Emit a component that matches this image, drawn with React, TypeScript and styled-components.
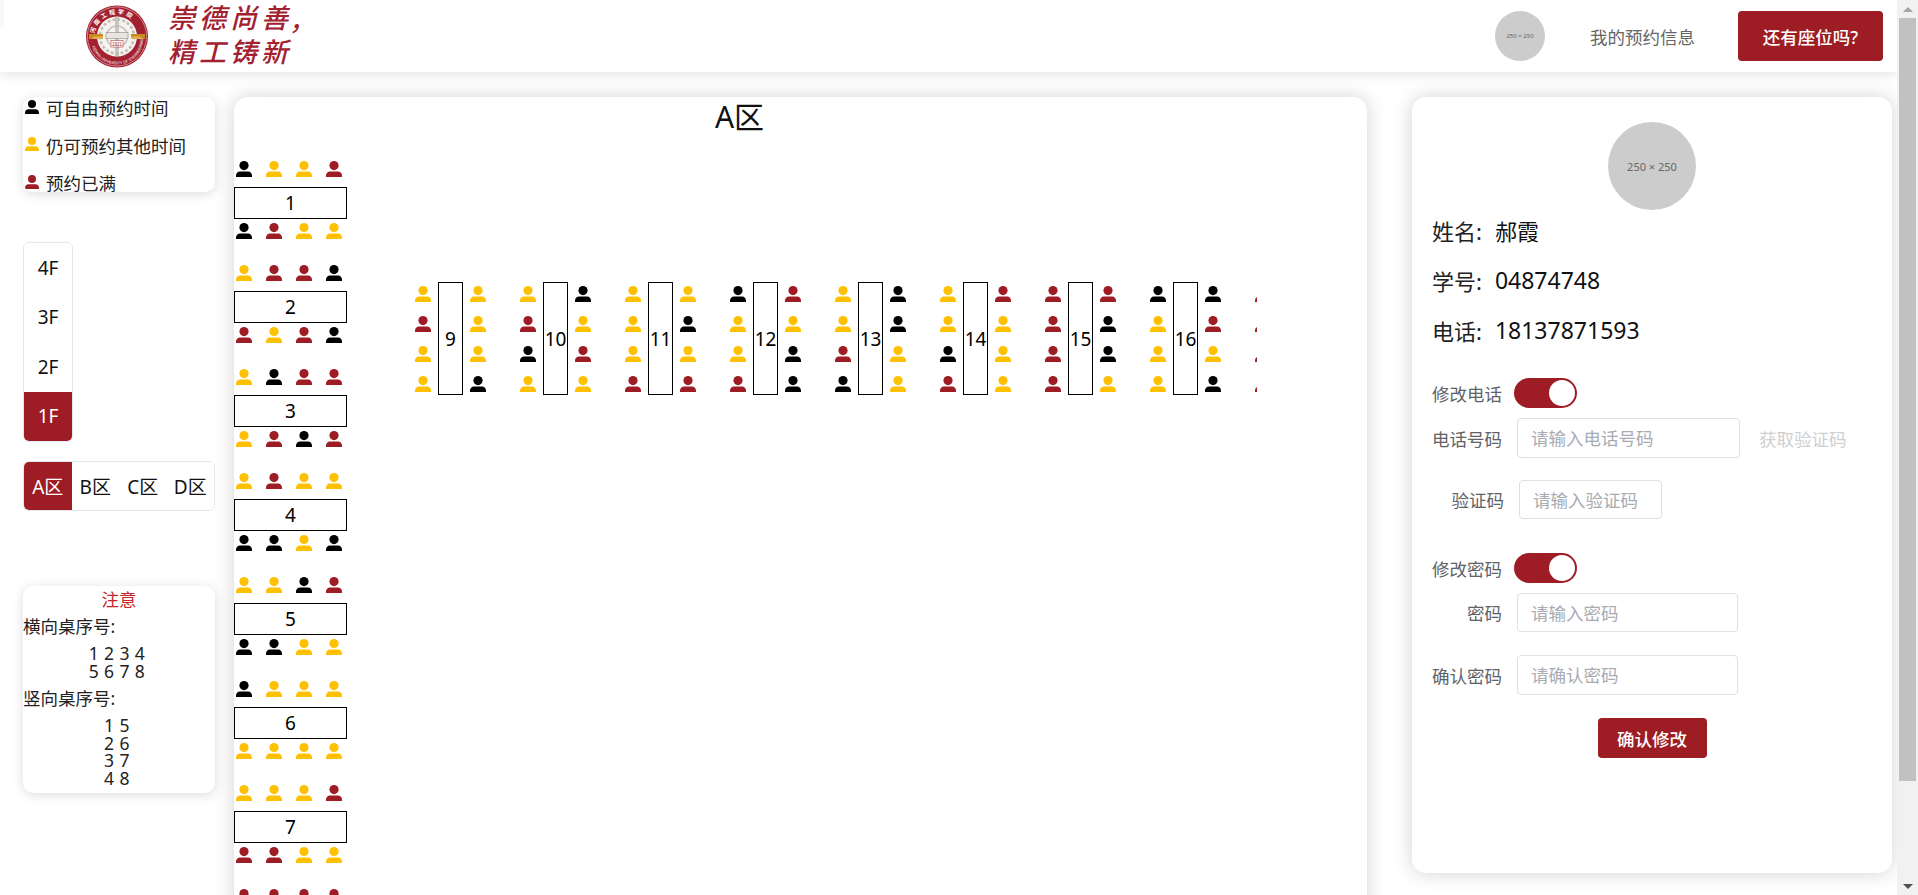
import React from 'react'
import styled, { createGlobalStyle } from 'styled-components'

const RED = '#9e1c23'
const FONT = `"Noto Sans", "Noto Sans CJK SC", sans-serif`

const GlobalStyle = createGlobalStyle`
  html, body {
    margin: 0;
    padding: 0;
    height: 895px;
    overflow: hidden;
    background: #fff;
    font-family: ${FONT};
    color: #111;
  }
  * {
    box-sizing: border-box;
  }
`

const Screen = styled.div`
  display: flex;
  width: 1918px;
  height: 895px;
  overflow: hidden;
`

const Page = styled.div`
  position: relative;
  width: 1897px;
  height: 895px;
  overflow: hidden;
`

const Scrollbar = styled.div`
  display: flex;
  flex-direction: column;
  align-items: center;
  width: 21px;
  height: 895px;
  background: #f1f1f1;
`

const ScrollArrow = styled.div<{ $down?: boolean }>`
  display: flex;
  align-items: center;
  justify-content: center;
  height: 18px;
  flex-shrink: 0;
  &::before {
    content: '';
    border-left: 5px solid transparent;
    border-right: 5px solid transparent;
    ${({ $down }) => ($down ? 'border-top: 5px solid #505050;' : 'border-bottom: 5px solid #a3a3a3;')}
  }
`

const ScrollThumb = styled.div`
  width: 17px;
  height: 763px;
  background: #c1c1c1;
`

const ScrollRest = styled.div`
  flex: 1;
`

const CornerTab = styled.div`
  position: absolute;
  left: 0;
  top: 0;
  width: 4px;
  height: 28px;
  background: #f7f7f7;
  border-bottom-right-radius: 4px;
  z-index: 3;
`

const Nav = styled.header`
  position: relative;
  z-index: 2;
  display: flex;
  align-items: center;
  height: 72px;
  padding-left: 86px;
  background: #fff;
  box-shadow: 0 2px 12px rgba(0, 0, 0, 0.12);
`

const Motto = styled.div`
  margin: 0 0 4px 20px;
  color: #a3202f;
  font-family: "Noto Sans CJK SC", sans-serif;
  font-size: 27px;
  font-weight: 500;
  font-style: italic;
  line-height: 34px;
  letter-spacing: 4px;
  white-space: nowrap;
`

const NavRight = styled.div`
  display: flex;
  align-items: center;
  margin-left: auto;
  padding-right: 14px;
`

const Avatar = styled.div<{ $size: number; $font: number }>`
  display: flex;
  align-items: center;
  justify-content: center;
  width: ${({ $size }) => $size}px;
  height: ${({ $size }) => $size}px;
  border-radius: 50%;
  background: #cccccc;
  color: #666;
  font-size: ${({ $font }) => $font}px;
  white-space: nowrap;
  flex-shrink: 0;
`

const NavLink = styled.span`
  margin-left: 45px;
  margin-right: 43px;
  color: #666;
  font-size: 17.5px;
`

const RedButton = styled.button<{ $width: number; $height: number }>`
  width: ${({ $width }) => $width}px;
  height: ${({ $height }) => $height}px;
  padding: 0;
  border: 0;
  border-radius: 4px;
  background: ${RED};
  color: #fff;
  font-family: ${FONT};
  font-size: 17.5px;
  font-weight: 500;
`

const Content = styled.main`
  display: flex;
  align-items: flex-start;
  padding: 25px 0 0 23px;
`

const LeftColumn = styled.aside`
  display: flex;
  flex-direction: column;
  width: 192px;
  flex-shrink: 0;
`

const Card = styled.section`
  background: #fff;
  border-radius: 10px;
  box-shadow: 0 2px 12px rgba(0, 0, 0, 0.14);
`

const LargeCard = styled(Card)`
  border-radius: 14px;
  box-shadow: 0 0 20px rgba(0, 0, 0, 0.18);
`

const Legend = styled(Card)`
  height: 95px;
  overflow: hidden;
`

const LegendRow = styled.div`
  display: flex;
  align-items: center;
  height: 37.5px;
  margin-top: -8px;
  margin-bottom: 8px;
  padding-left: 2px;
  font-size: 17.5px;
  color: #222;
  & > svg {
    margin: -2px 7px 0 0;
  }
`

const FloorList = styled.div`
  display: flex;
  flex-direction: column;
  width: 50px;
  height: 200px;
  margin-top: 50px;
  overflow: hidden;
  border: 1px solid #e4e7ed;
  border-radius: 6px;
`

const FloorItem = styled.div<{ $active?: boolean }>`
  display: flex;
  flex: 1;
  align-items: center;
  justify-content: center;
  font-size: 19px;
  background: ${({ $active }) => ($active ? RED : '#fff')};
  color: ${({ $active }) => ($active ? '#fff' : '#111')};
`

const AreaTabs = styled.div`
  display: flex;
  height: 50px;
  margin-top: 19px;
  overflow: hidden;
  border: 1px solid #e4e7ed;
  border-radius: 6px;
`

const AreaTab = styled.div<{ $active?: boolean }>`
  display: flex;
  flex: 1;
  align-items: center;
  justify-content: center;
  font-size: 19px;
  white-space: nowrap;
  background: ${({ $active }) => ($active ? RED : '#fff')};
  color: ${({ $active }) => ($active ? '#fff' : '#111')};
`

const Notice = styled(Card)`
  height: 207px;
  margin-top: 75px;
  font-size: 17.5px;
  color: #222;
`

const NoticeTitle = styled.div`
  height: 28px;
  line-height: 26px;
  text-align: center;
  color: #c9252d;
`

const NoticeLabel = styled.div`
  height: 28px;
  line-height: 24px;
`

const NoticeDigits = styled.div`
  padding: 3px 4px 6px 0;
  line-height: 17.6px;
  letter-spacing: 0.4px;
  text-align: center;
  white-space: pre;
`

const Hall = styled(LargeCard)`
  width: 1133px;
  height: 900px;
  margin-left: 19px;
  flex-shrink: 0;
  overflow: hidden;
`

const HallTitle = styled.div`
  height: 40px;
  padding-right: 122px;
  line-height: 40px;
  text-align: center;
  font-size: 30px;
  color: #111;
`

const HallBody = styled.div`
  display: flex;
  align-items: flex-start;
`

const RowTables = styled.div`
  width: 113px;
  padding-top: 24px;
  flex-shrink: 0;
`

const RowTable = styled.div`
  height: 104px;
`

const SeatRow = styled.div<{ $below?: boolean }>`
  display: flex;
  gap: 14px;
  height: ${({ $below }) => ($below ? 46 : 26)}px;
  padding: ${({ $below }) => ($below ? '4px 0 0 2px' : '0 0 0 2px')};
`

const TableBox = styled.div`
  display: flex;
  align-items: center;
  justify-content: center;
  border: 1px solid #000;
  background: #fff;
  font-size: 19px;
  color: #000;
`

const WideTable = styled(TableBox)`
  width: 113px;
  height: 32px;
`

const ColumnTables = styled.div`
  display: flex;
  width: 842px;
  margin-left: 68px;
  padding-top: 145px;
  overflow: hidden;
  flex-shrink: 0;
`

const ColumnTable = styled.div`
  display: flex;
  gap: 7px;
  width: 105px;
  flex-shrink: 0;
`

const SeatColumn = styled.div`
  display: flex;
  flex-direction: column;
  gap: 14px;
  padding-top: 4px;
`

const TallTable = styled(TableBox)`
  width: 25px;
  height: 113px;
`

const Profile = styled(LargeCard)`
  display: flex;
  flex-direction: column;
  width: 480px;
  height: 776px;
  margin-left: 45px;
  padding: 25px 20px 0;
  flex-shrink: 0;
`

const ProfileAvatar = styled.div`
  display: flex;
  justify-content: center;
  margin-bottom: -5px;
`

const InfoRow = styled.div`
  display: flex;
  align-items: center;
  height: 50px;
  font-size: 22px;
  color: #222;
`

const InfoValue = styled.span<{ $digits?: boolean }>`
  margin-left: 13px;
  color: #111;
  font-size: ${({ $digits }) => ($digits ? 23 : 22)}px;
`

const FormRow = styled.div<{ $top: number }>`
  display: flex;
  align-items: center;
  margin-top: ${({ $top }) => $top}px;
  font-size: 17.5px;
  color: #606266;
`

const FieldLabel = styled.label<{ $indent?: number }>`
  width: 70px;
  margin-left: ${({ $indent }) => $indent ?? 0}px;
  text-align: right;
  white-space: nowrap;
  flex-shrink: 0;
`

const ToggleTrack = styled.div`
  display: flex;
  justify-content: flex-end;
  align-items: center;
  width: 63px;
  height: 30px;
  margin-left: 12px;
  padding-right: 2px;
  border-radius: 15px;
  background: ${RED};
`

const ToggleKnob = styled.div`
  width: 26px;
  height: 26px;
  border-radius: 50%;
  background: #fff;
`

const TextInput = styled.input<{ $width: number; $height?: number }>`
  width: ${({ $width }) => $width}px;
  height: ${({ $height }) => $height ?? 40}px;
  margin-left: 15px;
  padding: 0 13px;
  border: 1px solid #dcdfe6;
  border-radius: 4px;
  background: #fff;
  font-family: ${FONT};
  font-size: 17.5px;
  outline: none;
  &::placeholder {
    color: #a8abb2;
    opacity: 1;
  }
`

const CodeLink = styled.span`
  margin-left: 19px;
  color: #cfcfcf;
  white-space: nowrap;
`

const FormAction = styled.div`
  display: flex;
  justify-content: center;
  margin-top: 23px;
`

type SeatState = 'K' | 'Y' | 'R'

const SEAT_COLORS: Record<SeatState, string> = {
  K: '#000000',
  Y: '#ffc000',
  R: RED
}

function Seat({ state, size = 16 }: { state: SeatState; size?: number }) {
  return (
    <svg width={size} height={size} viewBox="0 0 16 16" fill={SEAT_COLORS[state]} style={{ flexShrink: 0 }}>
      <circle cx="8" cy="4.6" r="4.6" />
      <path d="M0 16v-1.4C0 12.4 1.6 10.6 4 10.6h8c2.4 0 4 1.8 4 4V16z" />
    </svg>
  )
}

function Seats({ states }: { states: string }) {
  return (
    <>
      {states.split('').map((s, i) => (
        <Seat key={i} state={s as SeatState} />
      ))}
    </>
  )
}

function Seal() {
  return (
    <svg width="62" height="63" viewBox="0 0 62 62" style={{ flexShrink: 0 }}>
      <defs>
        <path id="sealTop" d="M8.5 31a22.5 22.5 0 0 1 45 0" />
        <path id="sealBottom" d="M5 33a26 26 0 0 0 52 0" />
      </defs>
      <circle cx="31" cy="31" r="31" fill="#a3202f" />
      <circle cx="31" cy="31" r="29.6" fill="none" stroke="#e9c9c9" strokeWidth="0.6" />
      <circle cx="31" cy="31" r="20" fill="#f6f3f0" />
      <circle cx="31" cy="31" r="17" fill="none" stroke="#c4bfba" strokeWidth="2.5" strokeDasharray="3 2" />
      <circle cx="31" cy="31" r="10.5" fill="none" stroke="#cbc6c1" strokeWidth="1.6" />
      <rect x="29" y="11" width="4" height="40" fill="#b8b3ae" opacity="0.7" />
      <path d="M3 28.5h14v5H3zM45 28.5h14v5H45z" fill="#c98a1e" />
      <path d="M8 31h9v2.5H6zM45 31h9l2 2.5H45z" fill="#e2b24f" />
      <rect x="20" y="27" width="22" height="6" fill="#e8e4df" stroke="#8f8a85" strokeWidth="0.6" />
      <rect x="25" y="35" width="12" height="6.5" fill="#fff" stroke="#a3202f" strokeWidth="0.5" />
      <text x="31" y="40.2" textAnchor="middle" fontSize="4.6" fill="#a3202f" fontFamily="Liberation Sans, sans-serif">1921</text>
      <text fontSize="6" fill="#fff" fontFamily="Noto Sans CJK SC, sans-serif" fontWeight="700" letterSpacing="2.2">
        <textPath href="#sealTop" startOffset="4%">河南工程学院</textPath>
      </text>
      <text fontSize="3.9" fill="#fff" fontFamily="Liberation Sans, sans-serif">
        <textPath href="#sealBottom" startOffset="10%">HENAN UNIVERSITY OF ENGINEERING</textPath>
      </text>
    </svg>
  )
}

const ROW_TABLES = [
  ['KYYR', 'KRYY'],
  ['YRRK', 'RYRK'],
  ['YKRR', 'YRKR'],
  ['YRYY', 'KKYK'],
  ['YYKR', 'KKYY'],
  ['KYYY', 'YYYY'],
  ['YYYR', 'RRYY'],
  ['RRRR', 'YYYY']
]

const COLUMN_TABLES = [
  ['YRYY', 'YYYK'],
  ['YRKY', 'KYRY'],
  ['YYYR', 'YKYR'],
  ['KYYR', 'RYKK'],
  ['YYRK', 'KKYY'],
  ['YYKR', 'RYYY'],
  ['RRRR', 'RKKY'],
  ['KYYY', 'KRYK'],
  ['RRRR', 'YYYY']
]

export default function App() {
  return (
    <Screen>
      <GlobalStyle />
      <Page>
        <CornerTab />
        <Nav>
          <Seal />
          <Motto>
            崇德尚善,
            <br />
            精工铸新
          </Motto>
          <NavRight>
            <Avatar $size={50} $font={6}>250 × 250</Avatar>
            <NavLink>我的预约信息</NavLink>
            <RedButton $width={145} $height={50}>还有座位吗?</RedButton>
          </NavRight>
        </Nav>
        <Content>
          <LeftColumn>
            <Legend>
              <LegendRow><Seat state="K" size={14} />可自由预约时间</LegendRow>
              <LegendRow><Seat state="Y" size={14} />仍可预约其他时间</LegendRow>
              <LegendRow><Seat state="R" size={14} />预约已满</LegendRow>
            </Legend>
            <FloorList>
              <FloorItem>4F</FloorItem>
              <FloorItem>3F</FloorItem>
              <FloorItem>2F</FloorItem>
              <FloorItem $active>1F</FloorItem>
            </FloorList>
            <AreaTabs>
              <AreaTab $active>A区</AreaTab>
              <AreaTab>B区</AreaTab>
              <AreaTab>C区</AreaTab>
              <AreaTab>D区</AreaTab>
            </AreaTabs>
            <Notice>
              <NoticeTitle>注意</NoticeTitle>
              <NoticeLabel>横向桌序号:</NoticeLabel>
              <NoticeDigits>{'1 2 3 4\n5 6 7 8'}</NoticeDigits>
              <NoticeLabel>竖向桌序号:</NoticeLabel>
              <NoticeDigits>{'1 5\n2 6\n3 7\n4 8'}</NoticeDigits>
            </Notice>
          </LeftColumn>
          <Hall>
            <HallTitle>A区</HallTitle>
            <HallBody>
              <RowTables>
                {ROW_TABLES.map(([above, below], i) => (
                  <RowTable key={i}>
                    <SeatRow><Seats states={above} /></SeatRow>
                    <WideTable>{i + 1}</WideTable>
                    <SeatRow $below><Seats states={below} /></SeatRow>
                  </RowTable>
                ))}
              </RowTables>
              <ColumnTables>
                {COLUMN_TABLES.map(([left, right], i) => (
                  <ColumnTable key={i}>
                    <SeatColumn><Seats states={left} /></SeatColumn>
                    <TallTable>{i + 9}</TallTable>
                    <SeatColumn><Seats states={right} /></SeatColumn>
                  </ColumnTable>
                ))}
              </ColumnTables>
            </HallBody>
          </Hall>
          <Profile>
            <ProfileAvatar>
              <Avatar $size={88} $font={11}>250 × 250</Avatar>
            </ProfileAvatar>
            <InfoRow>姓名:<InfoValue>郝霞</InfoValue></InfoRow>
            <InfoRow>学号:<InfoValue $digits>04874748</InfoValue></InfoRow>
            <InfoRow>电话:<InfoValue $digits>18137871593</InfoValue></InfoRow>
            <FormRow $top={23}>
              <FieldLabel>修改电话</FieldLabel>
              <ToggleTrack><ToggleKnob /></ToggleTrack>
            </FormRow>
            <FormRow $top={10}>
              <FieldLabel>电话号码</FieldLabel>
              <TextInput $width={223} placeholder="请输入电话号码" />
              <CodeLink>获取验证码</CodeLink>
            </FormRow>
            <FormRow $top={22}>
              <FieldLabel $indent={2}>验证码</FieldLabel>
              <TextInput $width={143} $height={39} placeholder="请输入验证码" />
            </FormRow>
            <FormRow $top={34}>
              <FieldLabel>修改密码</FieldLabel>
              <ToggleTrack><ToggleKnob /></ToggleTrack>
            </FormRow>
            <FormRow $top={10}>
              <FieldLabel>密码</FieldLabel>
              <TextInput $width={221} $height={39} placeholder="请输入密码" />
            </FormRow>
            <FormRow $top={23}>
              <FieldLabel>确认密码</FieldLabel>
              <TextInput $width={221} $height={40} placeholder="请确认密码" />
            </FormRow>
            <FormAction>
              <RedButton $width={109} $height={40}>确认修改</RedButton>
            </FormAction>
          </Profile>
        </Content>
      </Page>
      <Scrollbar>
        <ScrollArrow />
        <ScrollThumb />
        <ScrollRest />
        <ScrollArrow $down />
      </Scrollbar>
    </Screen>
  )
}
